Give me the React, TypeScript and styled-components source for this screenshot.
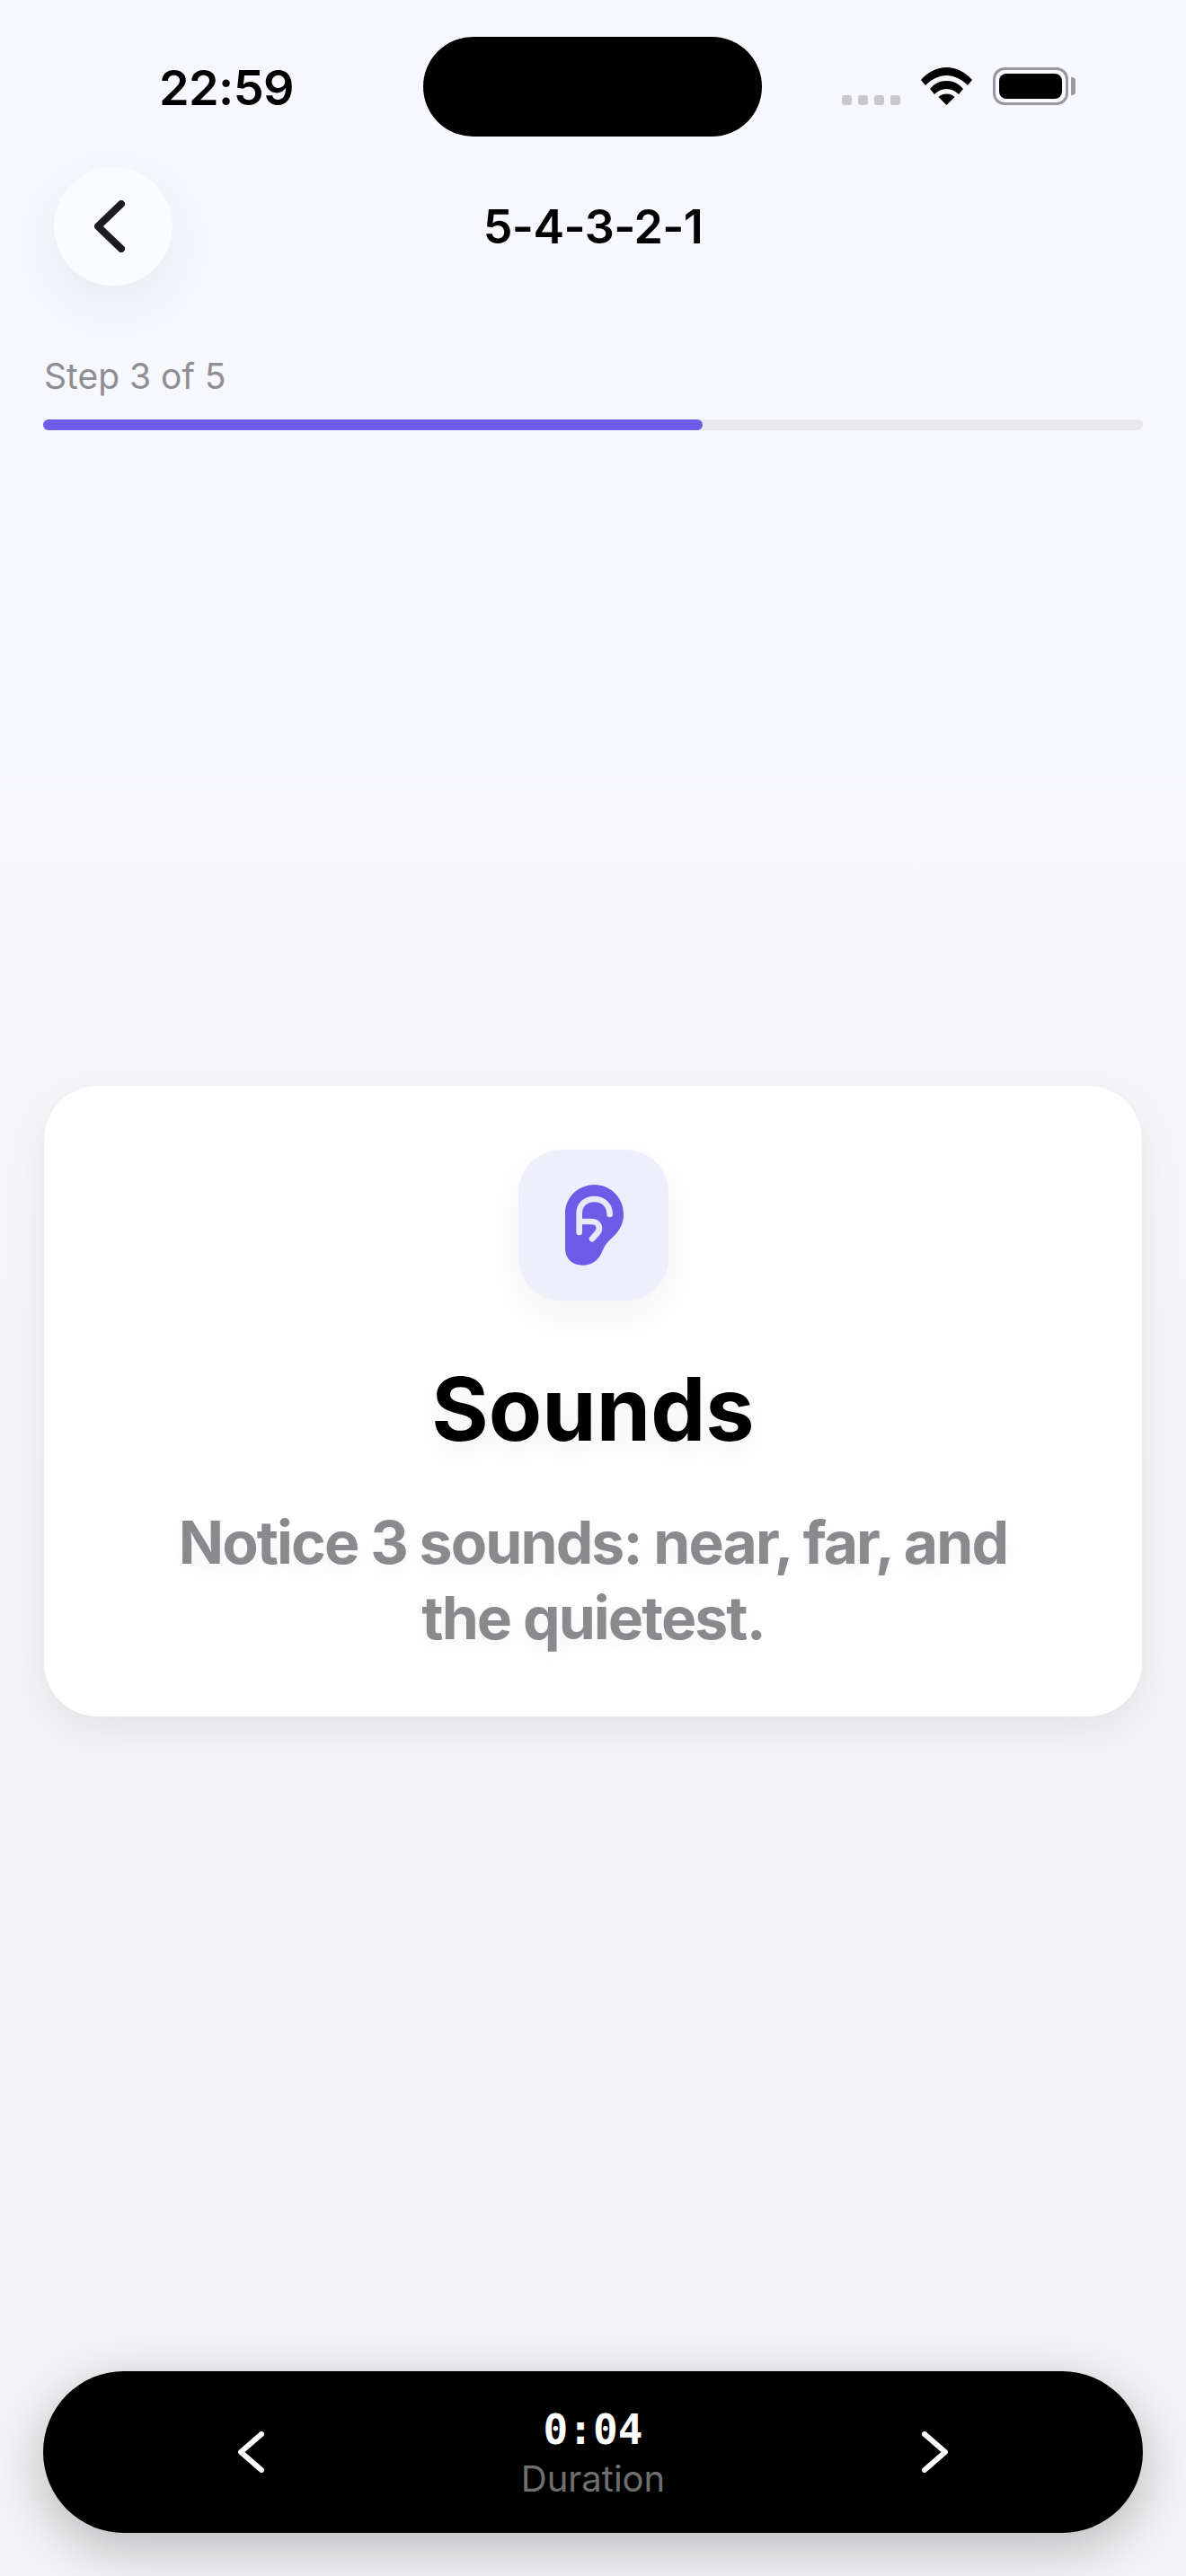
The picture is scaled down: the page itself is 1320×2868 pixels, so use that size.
import React from 'react';
import styled, { createGlobalStyle } from 'styled-components';

const GlobalStyle = createGlobalStyle`
  html, body {
    margin: 0;
    padding: 0;
  }

  body {
    font-family: Inter, "Liberation Sans", sans-serif;
    -webkit-font-smoothing: antialiased;
  }
`;

const Screen = styled.div`
  width: 1320px;
  height: 2868px;
  display: flex;
  flex-direction: column;
  overflow: hidden;
  background: linear-gradient(180deg, #f7f8fe 0%, #f7f8fd 25%, #f4f4f7 70%, #f4f4f6 100%);
`;

const StatusBar = styled.div`
  display: grid;
  grid-template-columns: 471px 377px 1fr;
  height: 111px;
  margin-top: 41px;
  flex-shrink: 0;
`;

const Time = styled.div`
  padding: 24px 0 0 177px;
  font-size: 54px;
  line-height: 65px;
  font-weight: 600;
  letter-spacing: -0.6px;
  color: #000;
`;

const Island = styled.div`
  background: #000;
  border-radius: 56px;
`;

const StatusIcons = styled.div`
  display: flex;
  align-items: flex-end;
  padding: 34px 0 0 89px;
  height: 42px;
`;

const SignalDots = styled.div`
  display: flex;
  gap: 7px;
  margin-right: 23px;
`;

const SignalDot = styled.span`
  width: 11px;
  height: 11px;
  border-radius: 3px;
  background: #c7c7cc;
`;

const Battery = styled.div`
  display: flex;
  align-items: center;
  margin-left: 23px;
`;

const BatteryBody = styled.div`
  box-sizing: border-box;
  width: 84px;
  height: 42px;
  padding: 4px;
  border: 3px solid #98989d;
  border-radius: 13px;
`;

const BatteryFill = styled.div`
  height: 100%;
  background: #000;
  border-radius: 8px;
`;

const BatteryCap = styled.div`
  width: 5px;
  height: 20px;
  margin-left: 3px;
  background: #98989d;
  border-radius: 0 4px 4px 0;
`;

const Header = styled.header`
  display: grid;
  grid-template-columns: 1fr auto 1fr;
  align-items: center;
  margin-top: 34px;
  padding: 0 60px;
  flex-shrink: 0;
`;

const BackButton = styled.button`
  width: 132px;
  height: 132px;
  display: flex;
  align-items: center;
  justify-content: center;
  padding: 0 9px 0 0;
  border: 0;
  border-radius: 50%;
  background: #fbfcfe;
  box-shadow: 0 20px 60px rgba(0, 0, 0, 0.06);
`;

const Title = styled.h1`
  margin: 0;
  padding-top: 2px;
  font-size: 52px;
  line-height: 64px;
  font-weight: 560;
  letter-spacing: -0.6px;
  color: #000;
`;

const ProgressSection = styled.section`
  padding: 0 48px;
  margin-top: 78px;
  flex-shrink: 0;
`;

const StepLabel = styled.div`
  padding-left: 1px;
  font-size: 39px;
  line-height: 46px;
  font-weight: 400;
  color: #8e8e93;
`;

const ProgressTrack = styled.div`
  height: 12px;
  margin-top: 25px;
  border-radius: 6px;
  background: #e8e8ed;
`;

const ProgressFill = styled.div`
  height: 100%;
  border-radius: 6px;
  background: #6c5ce7;
`;

const Content = styled.main`
  flex: 1;
  display: flex;
  align-items: center;
  padding: 0 49px;
`;

const Card = styled.div`
  box-sizing: border-box;
  width: 100%;
  height: 702px;
  display: flex;
  flex-direction: column;
  align-items: center;
  padding-top: 71px;
  border-radius: 60px;
  background: #fff;
  box-shadow: 0 15px 48px rgba(0, 0, 0, 0.075);
`;

const IconTile = styled.div`
  width: 167px;
  height: 168px;
  display: flex;
  align-items: center;
  justify-content: center;
  padding-left: 3px;
  box-sizing: border-box;
  border-radius: 48px;
  background: #eeeffc;
  box-shadow: 0 16px 48px rgba(0, 0, 0, 0.05);
`;

const CardTitle = styled.h2`
  margin: 63px 0 0;
  font-size: 97px;
  line-height: 116px;
  font-weight: 700;
  color: #000;
  text-shadow: 0 12px 32px rgba(0, 0, 0, 0.06);
`;

const CardText = styled.p`
  width: 960px;
  margin: 48px 0 0;
  font-size: 66px;
  line-height: 84px;
  font-weight: 650;
  letter-spacing: -1.9px;
  text-align: center;
  color: #8a8a8e;
  text-shadow: 0 8px 24px rgba(0, 0, 0, 0.05);
`;

const BottomBar = styled.footer`
  height: 180px;
  margin: 0 48px 48px;
  padding: 0 217px;
  display: flex;
  align-items: center;
  justify-content: space-between;
  flex-shrink: 0;
  border-radius: 90px;
  background: #000;
  box-shadow: 0 16px 60px rgba(0, 0, 0, 0.25);
`;

const NavButton = styled.button`
  display: flex;
  padding: 0;
  border: 0;
  background: none;
`;

const Timer = styled.div`
  display: flex;
  flex-direction: column;
  align-items: center;
`;

const TimerValue = styled.div`
  font-family: "DejaVu Sans Mono", "Liberation Mono", monospace;
  font-size: 46px;
  line-height: 54px;
  font-weight: 700;
  color: #fff;
`;

const TimerLabel = styled.div`
  margin-top: 5px;
  font-size: 40px;
  line-height: 46px;
  font-weight: 400;
  color: #6f6f6f;
`;

const WifiIcon = () => (
  <svg width="57" height="42" viewBox="0 0 57 42" fill="#000">
    <path d="M0 14 C8 5 18 0 28.5 0 C39 0 49 5 57 14 L52 20 C45 13 37 9 28.5 9 C20 9 12 13 5 20 Z" />
    <path d="M10 24 C15 18 21 15 28.5 15 C36 15 42 18 47 24 L42 30 C38 26 34 24 28.5 24 C23 24 19 26 15 30 Z" />
    <path d="M19.5 33 C22 30.5 25 29.5 28.5 29.5 C32 29.5 35 30.5 37.5 33 L28.5 42 Z" />
  </svg>
);

const Chevron = ({ dir, width, height, stroke, color }: { dir: 'left' | 'right'; width: number; height: number; stroke: number; color: string }) => {
  const s = stroke / 2;
  const points = dir === 'left'
    ? `${width - s},${s} ${s},${height / 2} ${width - s},${height - s}`
    : `${s},${s} ${width - s},${height / 2} ${s},${height - s}`;
  return (
    <svg width={width} height={height} viewBox={`0 0 ${width} ${height}`} fill="none">
      <polyline points={points} stroke={color} strokeWidth={stroke} strokeLinecap="round" strokeLinejoin="round" />
    </svg>
  );
};

const EarIcon = () => (
  <svg width="65" height="90" viewBox="327 234 195 270">
    <path
      fill="#6c5ce7"
      d="M327 330 C327 275 372 234 425 234 C478 234 522 277 522 332 C522 362 510 385 490 405 C470 423 460 435 450 458 C440 485 415 503 385 503 C350 503 327 480 327 447 Z"
    />
    <path
      fill="none"
      stroke="#e9e9f9"
      strokeWidth="20"
      strokeLinecap="round"
      strokeLinejoin="round"
      d="M374 393 L374 330 C374 298 398 282 425 282 C455 282 476 303 476 333 M374 357 L415 357 C440 357 448 380 434 396 L417 415"
    />
  </svg>
);

const App: React.FC = () => {
  const step = 3;
  const totalSteps = 5;

  return (
    <Screen>
      <GlobalStyle />
      <StatusBar>
        <Time>22:59</Time>
        <Island />
        <StatusIcons>
          <SignalDots>
            <SignalDot />
            <SignalDot />
            <SignalDot />
            <SignalDot />
          </SignalDots>
          <WifiIcon />
          <Battery>
            <BatteryBody>
              <BatteryFill />
            </BatteryBody>
            <BatteryCap />
          </Battery>
        </StatusIcons>
      </StatusBar>

      <Header>
        <BackButton aria-label="Back">
          <Chevron dir="left" width={34} height={58} stroke={8} color="#1c1c1e" />
        </BackButton>
        <Title>5-4-3-2-1</Title>
        <span />
      </Header>

      <ProgressSection>
        <StepLabel>Step {step} of {totalSteps}</StepLabel>
        <ProgressTrack>
          <ProgressFill style={{ width: `${(step / totalSteps) * 100}%` }} />
        </ProgressTrack>
      </ProgressSection>

      <Content>
        <Card>
          <IconTile>
            <EarIcon />
          </IconTile>
          <CardTitle>Sounds</CardTitle>
          <CardText>Notice 3 sounds: near, far, and the quietest.</CardText>
        </Card>
      </Content>

      <BottomBar>
        <NavButton aria-label="Previous">
          <Chevron dir="left" width={29} height={46} stroke={6} color="#fff" />
        </NavButton>
        <Timer>
          <TimerValue>0:04</TimerValue>
          <TimerLabel>Duration</TimerLabel>
        </Timer>
        <NavButton aria-label="Next">
          <Chevron dir="right" width={29} height={46} stroke={6} color="#fff" />
        </NavButton>
      </BottomBar>
    </Screen>
  );
};

export default App;
